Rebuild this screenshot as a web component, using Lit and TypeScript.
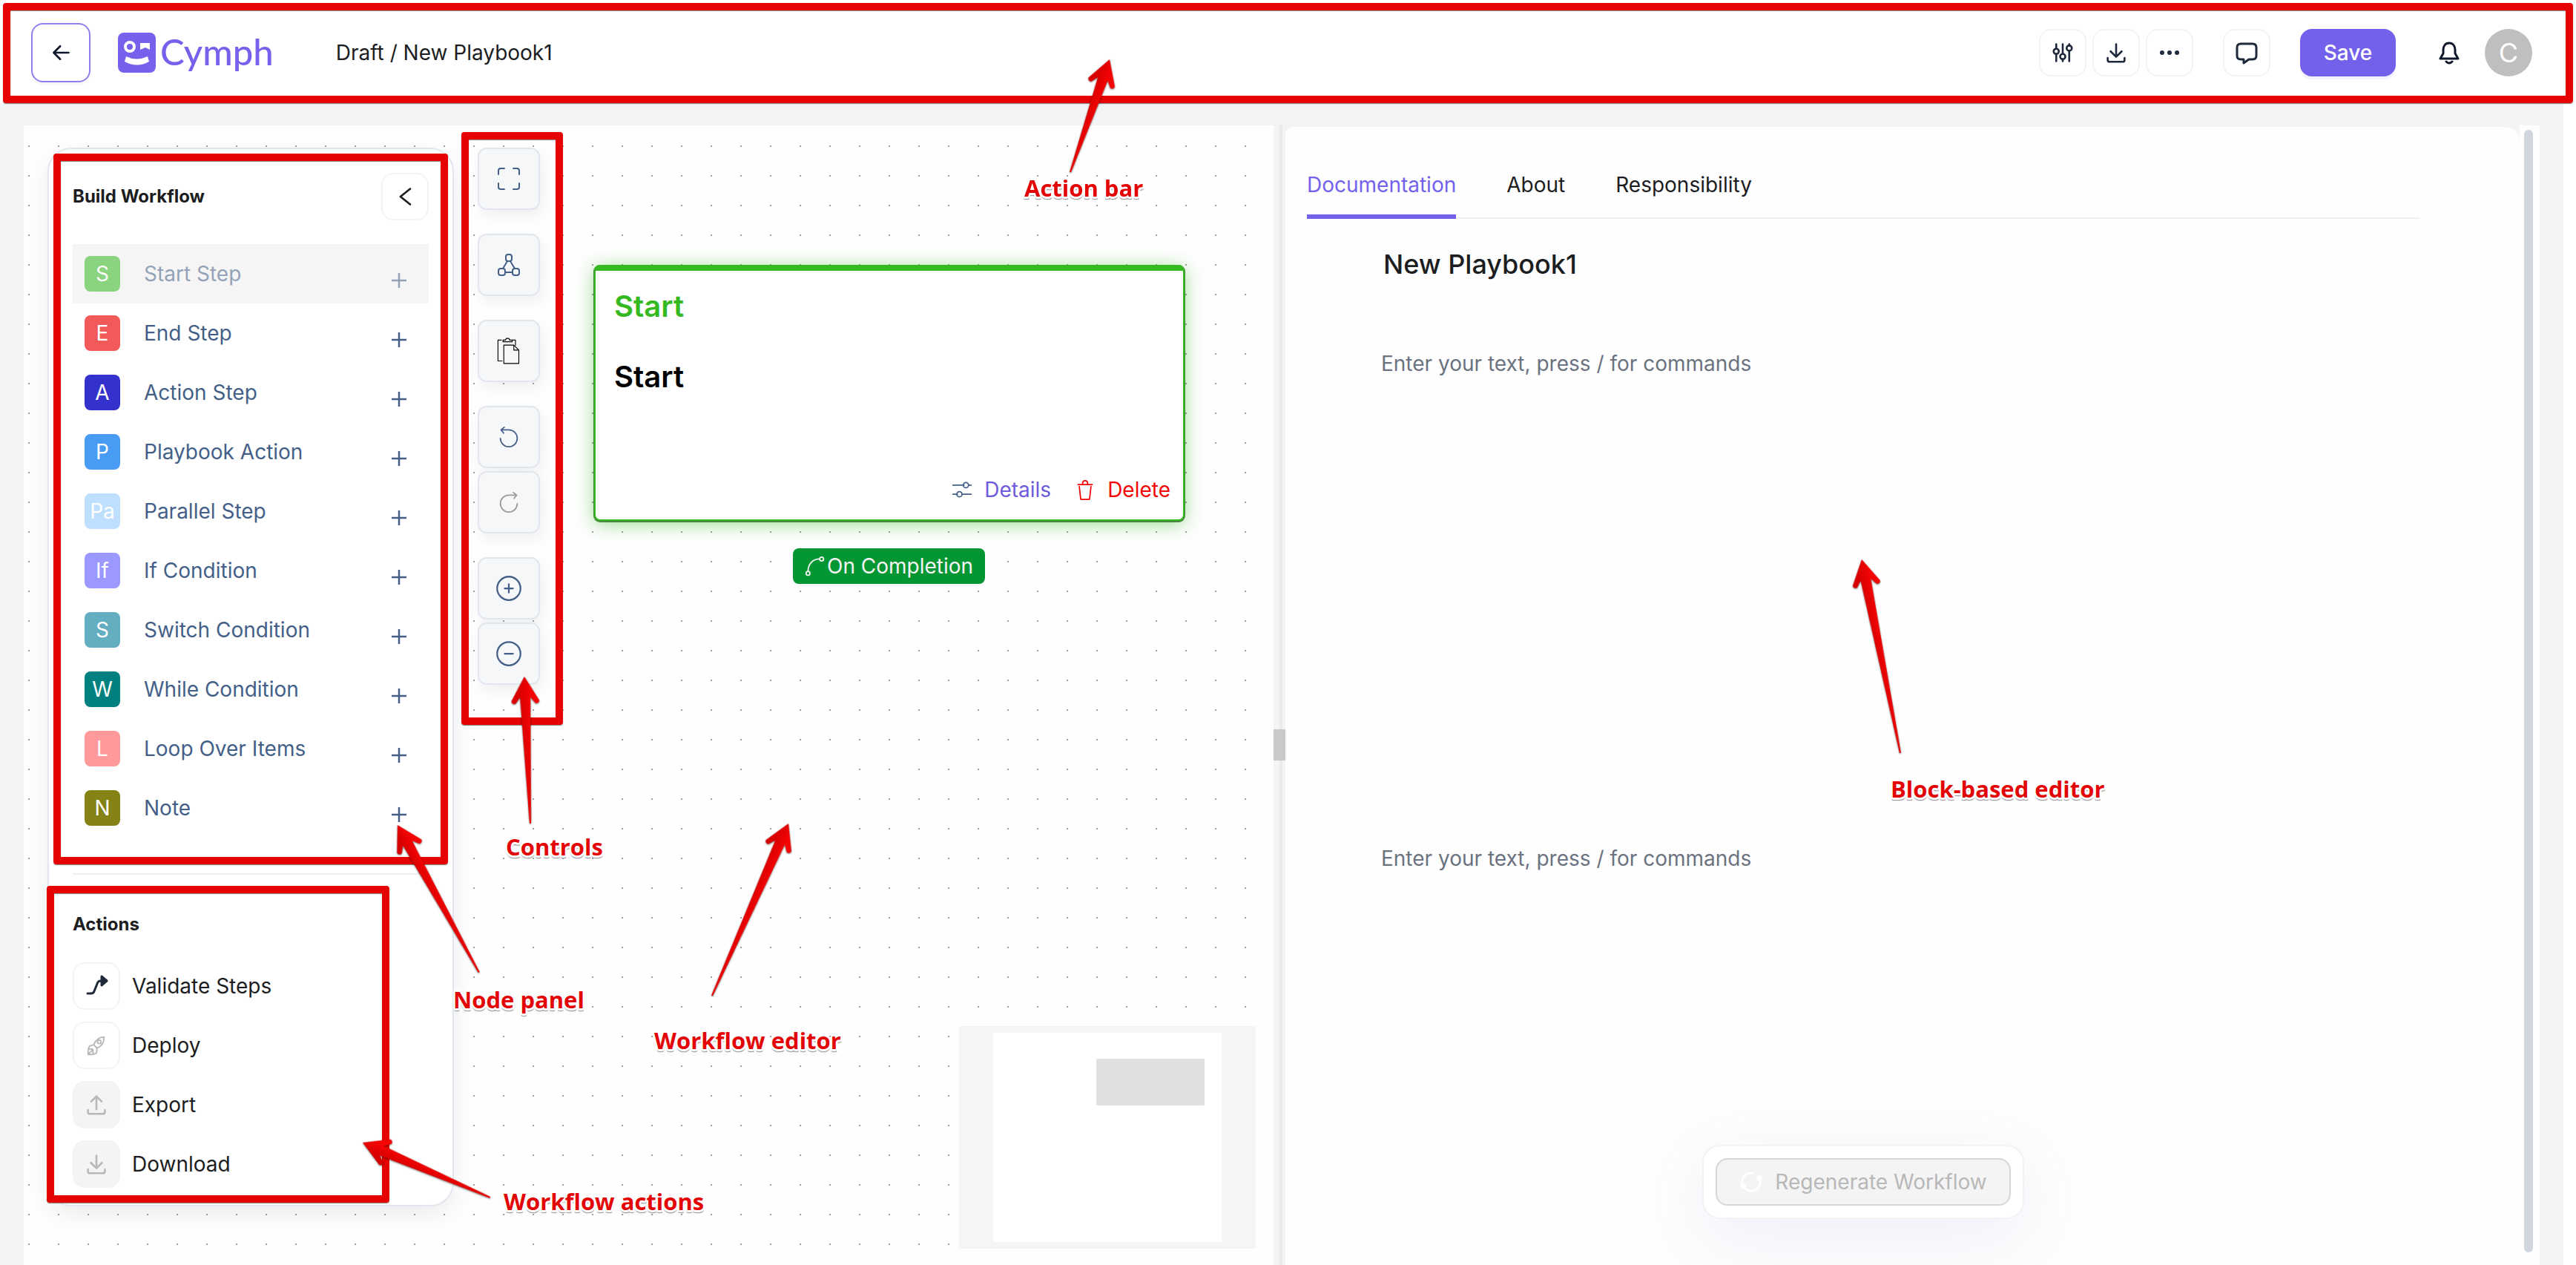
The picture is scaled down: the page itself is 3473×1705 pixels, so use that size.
import { LitElement, html, svg, css, TemplateResult } from "lit";
import { customElement, state } from "lit/decorators.js";
import { classMap } from "lit/directives/class-map.js";
import { styleMap } from "lit/directives/style-map.js";

const icon = (size: number, body: TemplateResult, stroke = 2) => html`<svg
  class="icon"
  width=${size}
  height=${size}
  viewBox="0 0 32 32"
  fill="none"
  stroke="currentColor"
  stroke-width=${stroke}
  stroke-linecap="round"
  stroke-linejoin="round"
  aria-hidden="true"
>${body}</svg>`;

const icons = {
  back: icon(28, svg`<path d="M28 16H5M15 6L5 16l10 10"/>`, 3),
  sliders: icon(28, svg`<path d="M6 3v7M6 18v11M16 3v15M16 26v3M26 3v2M26 13v16"/><circle cx="6" cy="14" r="4"/><circle cx="16" cy="22" r="4"/><circle cx="26" cy="9" r="4"/>`, 3),
  download: icon(28, svg`<path d="M16 3v19M7.500 14l8.500 8.500L24.500 14M3 24v3q0 3 3 3h20q3 0 3-3v-3"/>`, 3),
  upload: icon(28, svg`<path d="M16 23V3M8 11l8-8 8 8M3 24v3q0 3 3 3h20q3 0 3-3v-3"/>`, 3),
  dots: icon(28, svg`<g fill="currentColor" stroke="none"><circle cx="4.500" cy="16" r="3.400"/><circle cx="16" cy="16" r="3.400"/><circle cx="27.500" cy="16" r="3.400"/></g>`),
  comment: icon(32, svg`<path d="M8 4h16q5 0 5 5v11q0 5-5 5h-5l-7 5v-5H8q-5 0-5-5V9q0-5 5-5z"/>`, 3),
  bell: icon(32, svg`<path d="M16 3c-5 0-8 4-8 9v5l-4 7h24l-4-7v-5c0-5-3-9-8-9zM12 28q4 4 8 0"/>`, 3),
  collapse: icon(28, svg`<path d="M24 4L9 16l15 12"/>`, 3),
  plus: icon(20, svg`<path d="M16 1v30M1 16h30"/>`, 4),
  validate: icon(32, svg`<path d="M4 26h5q3 0 4-3l4-10q1-4 5-4h4"/><path d="M23 3l7 6-7 6z" fill="currentColor"/>`, 3),
  rocket: icon(30, svg`<path d="M27 4c-7 0-12 4-15 11l5 5c7-3 10-9 10-16zM12 15l-6 2-2 5 6-1M17 20l-1 7-5 2v-6M4 29l7-7M4 24v5h5"/><circle cx="20" cy="11" r="2.500"/>`, 2),
  fullscreen: icon(32, svg`<path d="M2 10V5q0-3 3-3h5M22 2h5q3 0 3 3v5M30 22v5q0 3-3 3h-5M10 30H5q-3 0-3-3v-5"/>`, 2),
  layout: icon(32, svg`<rect x="12" y="2" width="8" height="9" rx="3"/><rect x="2" y="21" width="9" height="9" rx="3"/><rect x="21" y="21" width="9" height="9" rx="3"/><path d="M14 11L8 21M18 11l6 10M11 26h10"/>`, 2),
  paste: icon(36, svg`<path d="M7 3H3v25h5M20 3h4v6M9 5V3h3l1-2h3l1 2h3v2z"/><path d="M10 9h12l6 6v16H10zM22 9v6h6"/>`, 1),
  undo: icon(28, svg`<path d="M3 18a13 13 0 1 0 13-13H4M9 1L4 5l4 5"/>`, 2),
  redo: icon(28, svg`<path d="M29 18A13 13 0 1 1 16 5h12M23 1l5 4-4 5"/>`, 2),
  zoomIn: icon(36, svg`<circle cx="16" cy="16" r="14"/><path d="M11 16h10M16 11v10"/>`, 2),
  zoomOut: icon(36, svg`<circle cx="16" cy="16" r="14"/><path d="M11 16h10"/>`, 2),
  details: icon(28, svg`<path d="M2 9h17M26 9h4M2 23h7M16 23h14"/><circle cx="22" cy="9" r="4"/><circle cx="12" cy="23" r="4"/>`, 2),
  trash: icon(28, svg`<path d="M5 8h22M7 11l2 18q0 2 2 2h10q2 0 2-2l2-18M12 7q0-5 4-5t4 5"/>`, 2),
  edge: icon(28, svg`<circle cx="5" cy="27" r="3"/><circle cx="26" cy="5" r="3"/><path d="M5 24C5 13 12 5 23 5"/>`, 2),
  refresh: icon(32, svg`<path d="M4 20C2 10 9 3 18 4M28 12c2 10-5 17-14 16q-6-1-8-6"/><circle cx="5" cy="21" r="2"/><circle cx="27" cy="11" r="2"/>`, 3),
};

interface Step { mark: string; label: string; color: string; disabled?: boolean }

const STEPS: Step[] = [
  { mark: "S", label: "Start Step", color: "#33b820", disabled: true },
  { mark: "E", label: "End Step", color: "#f25959" },
  { mark: "A", label: "Action Step", color: "#3431cc" },
  { mark: "P", label: "Playbook Action", color: "#499cf3" },
  { mark: "Pa", label: "Parallel Step", color: "#bfdfff" },
  { mark: "If", label: "If Condition", color: "#9b99ff" },
  { mark: "S", label: "Switch Condition", color: "#63aec1" },
  { mark: "W", label: "While Condition", color: "#00807f" },
  { mark: "L", label: "Loop Over Items", color: "#ff9a9a" },
  { mark: "N", label: "Note", color: "#868316" },
];

const ACTIONS = [
  { label: "Validate Steps", glyph: icons.validate, kind: "ready" },
  { label: "Deploy", glyph: icons.rocket, kind: "idle" },
  { label: "Export", glyph: icons.upload, kind: "off" },
  { label: "Download", glyph: icons.download, kind: "off" },
];

const CONTROLS = [
  [{ name: "Fit view", glyph: icons.fullscreen, kind: "" }],
  [{ name: "Auto layout", glyph: icons.layout, kind: "" }],
  [{ name: "Paste", glyph: icons.paste, kind: "dark" }],
  [{ name: "Undo", glyph: icons.undo, kind: "" }, { name: "Redo", glyph: icons.redo, kind: "muted" }],
  [{ name: "Zoom in", glyph: icons.zoomIn, kind: "" }, { name: "Zoom out", glyph: icons.zoomOut, kind: "" }],
];

const FRAMES = [
  { x: 72, y: 207, w: 532, h: 958 },
  { x: 63, y: 1194, w: 462, h: 427 },
  { x: 622, y: 178, w: 137, h: 799 },
];

const NOTES = [
  { text: "Action bar", x: 1381, y: 232, tip: [1496, 80], tail: [1443, 232] },
  { text: "Controls", x: 682, y: 1120, tip: [707, 912], tail: [715, 1110] },
  { text: "Node panel", x: 611, y: 1326, tip: [536, 1112], tail: [646, 1311] },
  { text: "Workflow editor", x: 882, y: 1381, tip: [1063, 1110], tail: [960, 1342] },
  { text: "Workflow actions", x: 679, y: 1598, tip: [489, 1540], tail: [661, 1614] },
  { text: "Block-based editor", x: 2549, y: 1042, tip: [2510, 754], tail: [2562, 1015] },
];

@customElement("callout-layer")
export class CalloutLayer extends LitElement {
  static styles = css`
    :host { position: absolute; inset: 0; overflow: hidden; pointer-events: none; }
    .frame {
      position: absolute; box-sizing: border-box; border: 10px solid #e60303; border-radius: 4px;
      box-shadow: 0 1px 1px #808080, inset 0 1px 1px #808080;
    }
    .bar { left: 4px; right: 4px; top: 4px; height: 135px; }
    .arrows { position: absolute; left: 0; top: 0; overflow: visible; filter: drop-shadow(0 1px 1px #00000088); }
    .note {
      position: absolute; margin: 0; white-space: nowrap; color: #e30505;
      font: 700 31px/42px "Open Sans", "Noto Sans", sans-serif;
      text-shadow: 2px 0 #fff, -2px 0 #fff, 0 2px #fff, 0 -2px #fff, 2px 2px #fff, -2px 2px #fff,
        2px -2px #fff, -2px -2px #fff, 0 3px #fff, 1px 4px 1px #999, -1px 4px 1px #aaa;
    }
  `;

  private arrow(tip: number[], tail: number[]) {
    const dx = tail[0] - tip[0];
    const dy = tail[1] - tip[1];
    const length = Math.round(Math.hypot(dx, dy));
    const angle = (Math.atan2(dy, dx) * 180) / Math.PI - 90;
    return svg`<path
      transform="translate(${tip[0]} ${tip[1]}) rotate(${angle})"
      fill="url(#shade)"
      d="M0 0L-18.500 32A3.400 3.400 0 0 0 -12.500 35L-7 28L-1 ${length}H1L7 28L12.500 35A3.400 3.400 0 0 0 18.500 32Z"/>`;
  }

  render() {
    return html`
      <div class="frame bar"></div>
      ${FRAMES.map((f) => html`<div class="frame" style=${styleMap({ left: `${f.x}px`, top: `${f.y}px`, width: `${f.w}px`, height: `${f.h}px` })}></div>`)}
      <svg class="arrows" width="10" height="10" aria-hidden="true">
        <defs>
          <linearGradient id="shade" gradientUnits="userSpaceOnUse" x1="-8" x2="8" y1="0" y2="0">
            <stop offset="0" stop-color="#d90000"></stop>
            <stop offset="1" stop-color="#f40404"></stop>
          </linearGradient>
        </defs>
        ${NOTES.map((n) => this.arrow(n.tip, n.tail))}
      </svg>
      ${NOTES.map((n) => html`<p class="note" style=${styleMap({ left: `${n.x}px`, top: `${n.y}px` })}>${n.text}</p>`)}
    `;
  }
}

@customElement("app-root")
export class AppRoot extends LitElement {
  @state() private tab = "Documentation";

  static styles = css`
    :host {
      display: flex; flex-direction: column; position: relative; min-height: 100vh; overflow: hidden;
      background: #fff; color: #1c1d1f; font: 400 28px/40px Inter, "Liberation Sans", sans-serif;
    }
    * { box-sizing: border-box; }
    button { font: inherit; color: inherit; padding: 0; border: 0; background: none; text-align: left; }
    h1, h2, p { margin: 0; }
    .icon { display: block; flex: none; }

    .top { display: flex; align-items: center; height: 139px; padding: 3px 59px 0 42px; background: #fff; }
    .square {
      display: flex; align-items: center; justify-content: center; flex: none; width: 64px; height: 64px;
      border: 2px solid #f3f3f4; border-radius: 16px; background: #fff;
    }
    .back { width: 80px; height: 80px; border-color: #8f80ef; color: #0f172a; box-shadow: 0 4px 0 #f9f9f9; }
    .brand { display: flex; align-items: center; gap: 6px; margin-left: 37px; color: #7561eb; text-decoration: none; }
    .word { padding-bottom: 4px; font: 500 49px/52px Lato, sans-serif; }
    .crumbs { margin-left: 84px; white-space: nowrap; }
    .tools { display: flex; align-items: center; gap: 8px; margin-left: auto; color: #1e293b; }
    .chat, .save { margin-left: 32px; }
    .save {
      width: 129px; height: 64px; border-radius: 16px; background: #7361eb; color: #fff; font-weight: 500;
      text-align: center; box-shadow: 0 4px 0 #f3f1fd;
    }
    .bell { margin: 0 24px 0 48px; color: #0f172a; }
    .avatar {
      display: flex; align-items: center; justify-content: center; width: 64px; height: 64px; border-radius: 50%;
      background: #bfbfbf; color: #fff; font-size: 36px;
    }

    .work { flex: 1; display: flex; margin-right: 17px; padding: 30px 32px 0; background: #f3f4f6; }
    .canvas {
      position: relative; flex: 0 0 calc(50% - 11px); display: flex; align-items: flex-start; gap: 32px; padding: 30px 32px;
      background: #fefefe conic-gradient(at 2px 2px, transparent 270deg, #9c9ca1 0) 6px 27px / 40px 40px;
    }
    .panel {
      width: 548px; padding: 32px 32px 23px; border: 2px solid #e2e7ef; border-radius: 32px; background: #fff;
      box-shadow: 0 12px 32px #00000012;
    }
    .head { display: flex; align-items: center; justify-content: space-between; }
    .title { font-size: 24px; line-height: 32px; font-weight: 700; }
    .steps { margin-top: 32px; padding-bottom: 48px; border-bottom: 2px solid #efeff1; }
    .step { display: flex; align-items: center; width: 100%; height: 80px; padding: 0 30px 0 16px; color: #445f87; }
    .step .label { flex: 1; padding-left: 32px; }
    .step .icon { margin-top: 17px; }
    .mark {
      display: flex; align-items: center; justify-content: center; width: 48px; height: 48px; border-radius: 8px;
      color: #fff;
    }
    .blocked { background: #f5f5f5; }
    .blocked > * { opacity: 0.55; }
    .actions { padding-top: 51px; }
    .list { display: flex; flex-direction: column; gap: 16px; margin-top: 35px; }
    .action { display: flex; align-items: center; gap: 16px; }
    .ready { color: #1e293b; }
    .idle { color: #b8b8b8; }
    .off { color: #b8b8b8; background: #f4f4f4; }

    .controls { display: flex; flex-direction: column; gap: 32px; }
    .group { display: flex; flex-direction: column; gap: 4px; }
    .control {
      display: flex; align-items: center; justify-content: center; width: 84px; height: 84px; border: 2px solid #e2e6ee;
      border-radius: 12px; background: #f6f7f9; color: #445f87; box-shadow: 4px 8px 20px #0000000f;
    }
    .dark { color: #000; }
    .muted { color: #999; }

    .node {
      position: absolute; left: 769px; top: 188px; display: flex; flex-direction: column; gap: 47px; width: 796px;
      height: 345px; padding: 24px 17px 20px 25px; border: 2px solid #35b921; border-top-width: 8px; border-radius: 8px;
      background: #fff; box-shadow: 0 1px 0 1px #49863f, 0 4px 24px #35b92180;
    }
    .node h2 { font-size: 40px; line-height: 48px; font-weight: 600; color: #000; }
    .node h2.kind { color: #35b921; }
    .links { display: flex; justify-content: flex-end; gap: 32px; margin-top: auto; }
    .link { display: flex; align-items: center; gap: 16px; color: #f40505; }
    .link.info { color: #6e5bdc; }
    .link.info .icon { color: #445f87; }
    .edge {
      position: absolute; left: 1037px; top: 570px; display: flex; align-items: center; gap: 2px; height: 48px;
      padding: 0 16px; border-radius: 8px; background: #049633; color: #f4f4f4; white-space: nowrap; box-shadow: 0 4px 0 #fafafa;
    }
    .minimap {
      position: absolute; right: 24px; bottom: 22px; width: 400px; height: 300px; padding: 9px 46px; background: #f5f5f5;
    }
    .view { height: 100%; padding: 35px 0 0 139px; background: #fff; }
    .thumb { width: 146px; height: 63px; border-radius: 2px; background: #e0e0e0; }

    .split { position: relative; flex: 0 0 16px; background: #f4f4f5; border-left: 8px solid #f4f4f5; }
    .split::before { content: ""; display: block; width: 4px; height: 100%; background: #e9eaec; }
    .grip { position: absolute; left: -8px; top: 53%; width: 16px; height: 42px; background: #c9c9cb; }

    .docs {
      flex: 1; display: flex; flex-direction: column; margin-top: 2px; padding: 50px 135px 62px 29px;
      border-radius: 12px 20px 0 0; background: #fefefe;
    }
    .tabs { display: flex; gap: 68px; height: 74px; border-bottom: 2px solid #efeff0; }
    .tab { height: 74px; padding: 8px 0 20px; border-bottom: 6px solid transparent; }
    .tab.on { color: #7361eb; border-color: #7361eb; }
    .doc-title { margin: 39px 0 92px 103px; font-size: 36px; line-height: 44px; font-weight: 500; }
    .block {
      display: block; flex: none; width: calc(100% - 101px); height: 200px; margin: 0 0 0 100px; padding: 0; border: 0; outline: 0; resize: none;
      overflow: hidden; background: none; font: inherit; color: #1c1d1f;
    }
    .block.tall { height: 667px; }
    .block::placeholder { color: #6b7280; opacity: 1; }
    .regen {
      align-self: center; margin-top: auto; padding: 16px; border: 2px solid #f3f3f4; border-radius: 24px; background: #fff;
      box-shadow: 0 24px 96px #6478c81c;
    }
    .regen button {
      display: flex; align-items: center; gap: 16px; height: 64px; padding: 0 30px; border: 2px solid #d6d6d6;
      border-radius: 16px; background: #f4f4f4; color: #b8b8b8;
    }
    .regen .icon { color: #fff; }
    .track { flex: 0 0 27px; padding: 6px 9px 17px 6px; background: #fefefe; }
    .bar { height: 100%; border-radius: 6px; background: #d1d5de; }
  `;

  render() {
    return html`
      <header class="top">
        <button class="square back" aria-label="Back">${icons.back}</button>
        <a class="brand" href="#">
          <svg width="51" height="54" viewBox="0 0 51 54" aria-hidden="true">
            <rect width="51" height="54" rx="8" fill="currentColor"></rect>
            <circle cx="16" cy="19" r="6" fill="none" stroke="#fff" stroke-width="4"></circle>
            <path d="M30 14h13v9l-6-3-7 3zM11 32q14 7 29 0l2 7q-16 9-33 0z" fill="#fff"></path>
          </svg>
          <span class="word">Cymph</span>
        </a>
        <div class="crumbs">Draft / New Playbook1</div>
        <div class="tools">
          <button class="square" aria-label="Settings">${icons.sliders}</button>
          <button class="square" aria-label="Download">${icons.download}</button>
          <button class="square" aria-label="More">${icons.dots}</button>
          <button class="square chat" aria-label="Comments">${icons.comment}</button>
          <button class="save">Save</button>
          <button class="bell" aria-label="Notifications">${icons.bell}</button>
          <div class="avatar">C</div>
        </div>
      </header>

      <main class="work">
        <section class="canvas">
          <aside class="panel">
            <div class="head">
              <h2 class="title">Build Workflow</h2>
              <button class="square" aria-label="Collapse panel">${icons.collapse}</button>
            </div>
            <div class="steps">
              ${STEPS.map((s) => html`
                <button class=${classMap({ step: true, blocked: !!s.disabled })} ?disabled=${s.disabled}>
                  <span class="mark" style=${styleMap({ background: s.color })}>${s.mark}</span>
                  <span class="label">${s.label}</span>${icons.plus}
                </button>`)}
            </div>
            <div class="actions">
              <h2 class="title">Actions</h2>
              <div class="list">
                ${ACTIONS.map((a) => html`
                  <button class="action"><span class="square ${a.kind}">${a.glyph}</span>${a.label}</button>`)}
              </div>
            </div>
          </aside>

          <div class="controls">
            ${CONTROLS.map((g) => html`<div class="group">
              ${g.map((c) => html`<button class="control ${c.kind}" aria-label=${c.name}>${c.glyph}</button>`)}
            </div>`)}
          </div>

          <article class="node">
            <h2 class="kind">Start</h2>
            <h2>Start</h2>
            <div class="links">
              <button class="link info">${icons.details}Details</button>
              <button class="link">${icons.trash}Delete</button>
            </div>
          </article>
          <div class="edge">${icons.edge}On Completion</div>
          <div class="minimap"><div class="view"><div class="thumb"></div></div></div>
        </section>

        <div class="split"><div class="grip"></div></div>

        <section class="docs">
          <nav class="tabs">
            ${["Documentation", "About", "Responsibility"].map((t) => html`
              <button class=${classMap({ tab: true, on: this.tab === t })} @click=${() => (this.tab = t)}>${t}</button>`)}
          </nav>
          <h1 class="doc-title">New Playbook1</h1>
          <textarea class="block tall" aria-label="Block 1" placeholder="Enter your text, press / for commands"></textarea>
          <textarea class="block" aria-label="Block 2" placeholder="Enter your text, press / for commands"></textarea>
          <div class="regen"><button disabled>${icons.refresh}Regenerate Workflow</button></div>
        </section>
        <div class="track"><div class="bar"></div></div>
      </main>
      <callout-layer></callout-layer>
    `;
  }
}
